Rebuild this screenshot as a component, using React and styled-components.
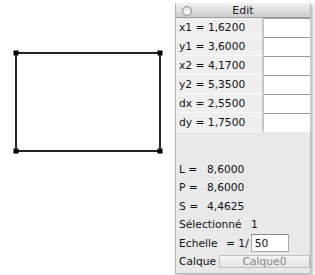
import React from 'react';
import styled, { createGlobalStyle } from 'styled-components';

const GlobalStyle = createGlobalStyle`
	html, body {
		margin: 0;
		padding: 0;
		background: #fff;
	}
	body {
		font-family: "DejaVu Sans", "Liberation Sans", sans-serif;
	}
`;

const Page = styled.div`
	display: flex;
	align-items: flex-start;
	width: 315px;
	height: 275px;
	overflow: hidden;
`;

const Canvas = styled.div`
	width: 175px;
	height: 275px;
	flex: none;
`;

const Panel = styled.div`
	margin-top: 3px;
	width: 136px;
	height: 271px;
	flex: none;
	display: flex;
	flex-direction: column;
	background: #e9e9e9;
	border: 1px solid #b8b8b8;
	border-top: none;
	box-sizing: border-box;
	box-shadow: 2px 2px 3px rgba(0,0,0,0.25);
	font-size: 10.7px;
	color: #111;
`;

const TitleBar = styled.div`
	position: relative;
	height: 14px;
	display: flex;
	align-items: center;
	justify-content: center;
	background: linear-gradient(#f2f2f2, #cdcdcd);
	border-bottom: 1px solid #9c9c9c;
	font-size: 11px;
	color: #222;
`;

const CloseDot = styled.span`
	position: absolute;
	left: 6px;
	top: 3px;
	width: 8px;
	height: 8px;
	border-radius: 50%;
	border: 1px solid #8c8c8c;
	background: radial-gradient(circle at 50% 70%, #ffffff, #d4d4d4);
`;

const Grid = styled.div`
	display: grid;
	grid-template-columns: 87px 48px;
`;

const Label = styled.div`
	height: 19px;
	display: flex;
	align-items: center;
	padding-left: 3px;
	background: #efefef;
	border-right: 1px solid #c4c4c4;
	border-bottom: 1px solid #f8f8f8;
	box-sizing: border-box;
`;

const Field = styled.div`
	height: 19px;
	background: #fff;
	border-top: 1px solid #9a9a9a;
	border-left: 1px solid #c8c8c8;
	border-right: 1px solid #c8c8c8;
	box-sizing: border-box;
`;

const Stats = styled.div`
	margin-top: 28px;
	display: flex;
	flex-direction: column;
	padding-left: 3px;
`;

const StatRow = styled.div`
	height: 18.5px;
	display: flex;
	align-items: center;
	white-space: pre;
`;

const Key = styled.span`
	width: ${(p) => p.w || 28}px;
	flex: none;
`;

const ScaleInput = styled.span`
	margin-left: 2px;
	width: 38px;
	height: 18px;
	display: flex;
	align-items: center;
	padding-left: 3px;
	box-sizing: border-box;
	background: #fff;
	border: 1px solid #a8a8a8;
	border-top-color: #8a8a8a;
`;

const LayerButton = styled.span`
	width: 91px;
	height: 13px;
	display: flex;
	align-items: center;
	justify-content: center;
	background: linear-gradient(#f4f4f4, #e4e4e4);
	border: 1px solid #c0c0c0;
	color: #8a8a8a;
	box-sizing: border-box;
`;

const coords = [
	['x1', '1,6200'],
	['y1', '3,6000'],
	['x2', '4,1700'],
	['y2', '5,3500'],
	['dx', '2,5500'],
	['dy', '1,7500'],
];

function Drawing() {
	const pts = [[16, 53], [160, 53], [16, 151], [160, 151]];
	return (
		<svg width="175" height="275">
			<rect x="16" y="53" width="144" height="98" fill="none" stroke="#000" strokeWidth="1.7" />
			{pts.map(([x, y]) => (
				<rect key={`${x}-${y}`} x={x - 2.5} y={y - 2.5} width="5" height="5" fill="#000" />
			))}
		</svg>
	);
}

export default function App() {
	return (
		<Page>
			<GlobalStyle />
			<Canvas>
				<Drawing />
			</Canvas>
			<Panel>
				<TitleBar>
					<CloseDot />
					Edit
				</TitleBar>
				<Grid>
					{coords.map(([k, v]) => (
						<React.Fragment key={k}>
							<Label>{k} = {v}</Label>
							<Field />
						</React.Fragment>
					))}
				</Grid>
				<Stats>
					<StatRow><Key>L =</Key>8,6000</StatRow>
					<StatRow><Key>P =</Key>8,6000</StatRow>
					<StatRow><Key>S =</Key>4,4625</StatRow>
					<StatRow><Key w={72}>Sélectionné</Key>1</StatRow>
					<StatRow>
						<Key w={47}>Echelle</Key>= 1/
						<ScaleInput>50</ScaleInput>
					</StatRow>
					<StatRow>
						<Key w={40}>Calque</Key>
						<LayerButton>Calque0</LayerButton>
					</StatRow>
				</Stats>
			</Panel>
		</Page>
	);
}
